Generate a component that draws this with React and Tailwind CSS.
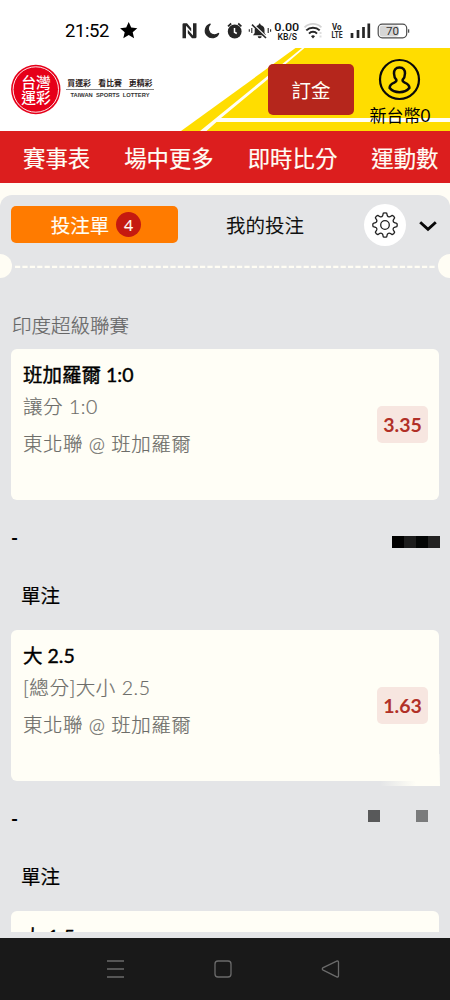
import React from "react";

const FONT = "font-['Lato','Noto_Sans_CJK_TC',sans-serif]";

function StatusBar() {
  return (
    <div className="flex h-12 items-center bg-white pt-[13px] pl-[65px] text-[#1c1c1c]">
      <span className="w-[54px] pt-px font-['Roboto',sans-serif] text-[18.5px] leading-none tracking-[-0.4px] whitespace-nowrap text-black">21:52</span>
      <svg className="block h-[48px] w-[331px] -translate-y-px" viewBox="119 6 331 48" fill="none">
        <path d="M128.700 22l2.500 5.600 6.100.6-4.600 4 1.400 6-5.400-3.200-5.400 3.200 1.400-6-4.600-4 6.100-.6z" fill="#000" />
        <path d="M182.500 24.500q0-1.300 1.300-1.300h3.200l4.200 5v3.400l-5.200-5.800v12.400h-3.500zM196.500 36.700q0 1.500-1.300 1.500h-3.200l-4.200-5v-3.400l5.200 5.800V23.200h3.500z" fill="#262626" />
        <path d="M210.400 24a7 7 0 1 0 8.400 9.300 6.200 6.200 0 0 1-8.400-9.300z" fill="#262626" stroke="#262626" strokeWidth="1.200" />
        <circle cx="234.700" cy="31.500" r="6.900" fill="#262626" />
        <path d="M228 26.300l3.200-2.800M241.400 26.300l-3.200-2.800" stroke="#262626" strokeWidth="1.700" />
        <path d="M234.500 28v4.200l2.300 1.300" stroke="#fff" strokeWidth="1.500" />
        <path d="M253 35.300l1.700-2.400v-3.100a5 5 0 0 1 3.900-4.800c.1-2 2-2 2.100 0a5 5 0 0 1 3.800 4.800v3.100l1.600 2.400zM257.700 36.300h4a2 2 0 0 1-4 0z" fill="#262626" />
        <path d="M252.700 24.200l14.200 13.500" stroke="#fff" strokeWidth="2" />
        <path d="M252 24.700l14 13.300" stroke="#262626" strokeWidth="1.600" />
        <path d="M249.300 29.300v2.400M251.800 28v5M268.200 28v5M270.600 29.300v2.400" stroke="#262626" strokeWidth="1.100" />
        <text x="274.300" y="31.200" fontFamily="Roboto" fontWeight="500" fontSize="11.800" textLength="25" lengthAdjust="spacingAndGlyphs" fill="#111">0.00</text>
        <text x="277.500" y="39.500" fontFamily="Roboto" fontWeight="500" fontSize="8.600" textLength="19.500" lengthAdjust="spacingAndGlyphs" fill="#111">KB/S</text>
        <path d="M304.600 27.400a12 12 0 0 1 16.800 0" stroke="#d2d2d2" strokeWidth="1.800" />
        <path d="M306.300 30.400a9.500 9.500 0 0 1 13.400 0M309 33.600a5.500 5.500 0 0 1 8 0" stroke="#262626" strokeWidth="2" />
        <path d="M313 38.500l-2-2.300a3 3 0 0 1 4 0z" fill="#262626" />
        <path d="M320.500 32v2M320.500 35.500v2" stroke="#ddd" strokeWidth="2" />
        <text x="332" y="30.300" fontFamily="Roboto" fontWeight="700" fontSize="9" textLength="9.500" lengthAdjust="spacingAndGlyphs" fill="#262626">Vo</text>
        <text x="331.500" y="38" fontFamily="Roboto" fontWeight="700" fontSize="9" textLength="11" lengthAdjust="spacingAndGlyphs" fill="#262626">LTE</text>
        <path d="M352 33v5M358 30v8M363.500 27v11M368.800 23.500v14.500" stroke="#262626" strokeWidth="2.700" />
        <rect x="378.200" y="24.200" width="28.500" height="13.600" rx="4" stroke="#4c4c4c" strokeWidth="1.200" fill="#fff" />
        <rect x="379.700" y="25.600" width="19" height="10.800" rx="2.600" fill="#d6d6d6" />
        <path d="M408.600 29.300v3.400" stroke="#4c4c4c" strokeWidth="1.300" />
        <text x="386.100" y="35" fontFamily="Roboto" fontSize="11" textLength="13" lengthAdjust="spacingAndGlyphs" fill="#333">70</text>
      </svg>
    </div>
  );
}

function Header() {
  return (
    <div className="relative h-[83px] bg-white">
      <svg className="absolute inset-0" width="450" height="83" viewBox="0 48 450 83">
        <path d="M295.500 48H450V131H181z" fill="#ffdd00" />
        <path d="M302 48h2.500L264 82.500 221 118h229v4H216.500L206.500 131H200z" fill="#fffef5" />
      </svg>
      <div className="relative flex h-full items-start">
        <svg className="ml-[11px] mt-[16px] block shrink-0" width="145" height="51" viewBox="11 64 145 51">
          <circle cx="35.800" cy="89.500" r="24.700" fill="#e60019" />
          <circle cx="35.800" cy="89.500" r="22.700" fill="none" stroke="#fff" strokeWidth="0.900" />
          <g fontFamily="'Noto Sans CJK TC'" fontWeight="500" fontSize="14.800" fill="#fff">
            <text x="21.300" y="87.900">台灣</text>
            <text x="21.300" y="102.900">運彩</text>
          </g>
          <g fontFamily="'Noto Sans CJK TC'" fontWeight="700" fontSize="7.900" fill="#2a2020">
            <text x="67.300" y="85.500">買運彩</text>
            <text x="98.300" y="85.500">看比賽</text>
            <text x="128.800" y="85.500">更精彩</text>
          </g>
          <path d="M66 89.500h88" stroke="#555" strokeWidth="0.700" />
          <text x="70.500" y="97.300" fontFamily="'Liberation Sans'" fontWeight="700" fontSize="5.600" textLength="79" lengthAdjust="spacingAndGlyphs" fill="#333" style={{ whiteSpace: "pre" }}>TAIWAN  SPORTS  LOTTERY</text>
        </svg>
        <button className="ml-[112px] mt-4 flex h-[51px] w-[86px] shrink-0 items-center justify-center rounded-[5px] bg-[#b5261c] pt-0.5 text-[19.500px] leading-none text-[#fffdf5]">訂金</button>
        <div className="ml-3 mt-2.5 flex w-[68px] flex-col items-center text-black">
          <svg width="44" height="44" viewBox="0 0 44 44" fill="none" stroke="#0a0a0a">
            <circle cx="21.500" cy="21.500" r="19.500" strokeWidth="2.200" />
            <path d="M21.500 9.500c-4 0-5.600 2.900-5.500 6 .1 3 1.100 5 2.300 6.200.5 1.700-.3 2.200-2 2.900-3 1.200-4.700 2.600-4.700 5.300 2.600 3.200 6 4.300 9.900 4.300s7.300-1.100 9.900-4.300c0-2.700-1.700-4.100-4.700-5.300-1.700-.7-2.500-1.200-2-2.900 1.200-1.200 2.200-3.200 2.300-6.200.1-3.100-1.500-6-5.500-6z" strokeWidth="2.500" strokeLinejoin="round" />
          </svg>
          <span className="mt-[5px] text-[17px] leading-[18px] whitespace-nowrap">新台幣0</span>
        </div>
      </div>
    </div>
  );
}

function MainNav() {
  return (
    <nav className="flex h-[52px] items-center gap-[34px] overflow-hidden bg-[#dc1e1e] pt-[4px] pl-[23px] text-[22.400px] leading-none whitespace-nowrap text-[#fffdf5] [-webkit-text-stroke:0.2px]">
      <span>賽事表</span>
      <span>場中更多</span>
      <span>即時比分</span>
      <span>運動數</span>
    </nav>
  );
}

function Tabs() {
  return (
    <div className="flex h-[59px] items-center pl-[11px]">
      <button className="flex h-[37px] w-[167px] items-center justify-center gap-[7px] rounded-[5px] bg-[#ff7b00] pl-[3px] text-[19.500px] leading-none text-[#fffdf5] [-webkit-text-stroke:0.15px]">
        <span className="pt-[3px]">投注單</span>
        <span className="flex size-[25px] items-center justify-center rounded-full bg-[#c51a10] text-[16px]">4</span>
      </button>
      <span className="ml-12 w-[138px] pt-[3px] text-[19.500px] leading-none text-[#111]">我的投注</span>
      <span className="flex size-[42px] shrink-0 items-center justify-center rounded-full bg-white">
        <svg width="26" height="26" viewBox="0 0 26 26" fill="none" stroke="#222" strokeWidth="1.300" strokeLinejoin="round">
          <path d="M11.300 1.200Q13 .4 14.700 1.200L15.300 3.600Q16.200 5.300 18 4.700L20.200 3.400Q22 4 22.600 5.800L21.300 8Q20.700 9.800 22.400 10.700L24.800 11.300Q25.600 13 24.800 14.700L22.400 15.300Q20.700 16.200 21.300 18L22.600 20.200Q22 22 20.200 22.600L18 21.300Q16.200 20.700 15.300 22.400L14.700 24.800Q13 25.600 11.300 24.800L10.700 22.400Q9.800 20.700 8 21.300L5.800 22.600Q4 22 3.400 20.200L4.700 18Q5.300 16.200 3.600 15.300L1.200 14.700Q.4 13 1.200 11.300L3.600 10.700Q5.300 9.800 4.700 8L3.400 5.800Q4 4 5.800 3.400L8 4.700Q9.800 5.300 10.700 3.600z" />
          <circle cx="13" cy="13" r="4.300" />
        </svg>
      </span>
      <svg className="mt-0.5 ml-[13px]" width="18" height="12" viewBox="0 0 18 12" fill="none" stroke="#080808" strokeWidth="2.900">
        <path d="M1.200 2.200L9 9.400l7.800-7.200" />
      </svg>
    </div>
  );
}

function TicketTear() {
  return (
    <div className="flex h-[24px] items-center overflow-hidden">
      <span className="-ml-3 size-6 shrink-0 rounded-full bg-[#fffdf4]" />
      <svg className="block grow" height="4" width="426">
        <path d="M3 2.900H424" stroke="#fffdf4" strokeWidth="2.400" strokeDasharray="5.200 2.200" />
      </svg>
      <span className="-mr-3 size-6 shrink-0 rounded-full bg-[#fffdf4]" />
    </div>
  );
}

function BetCard({ pick, market, match, odds, smear }) {
  return (
    <div className="relative mx-[11px] flex h-[151px] items-center justify-between rounded-md bg-[#fffef6] pr-[11px] pl-3">
      {smear && (
        <span className="absolute right-[-1px] bottom-[-5px] h-8 w-[60px] bg-linear-to-r from-transparent to-[#fffef6] to-60% [clip-path:polygon(99%_0,100%_100%,0_100%,0_60%)]" />
      )}
      <div className="relative h-full pt-[11px] whitespace-nowrap">
        <p className="h-[32px] text-[19.500px] leading-[30px] text-black [-webkit-text-stroke:0.4px]">{pick}</p>
        {market && <p className="h-[36px] text-[19.500px] font-light leading-[30px] tracking-[0.55px] text-[#6d6d69] [-webkit-text-stroke:0.2px]">{market}</p>}
        {match && <p className="text-[19.500px] font-light leading-[32px] tracking-[0.500px] text-[#6d6d69] [-webkit-text-stroke:0.2px]">{match}</p>}
      </div>
      {odds && (
        <span className="relative flex h-[37px] w-[51px] items-center justify-center rounded-[5px] bg-[#f7e6e0] text-[19.500px] font-bold leading-none text-[#b13027]">{odds}</span>
      )}
    </div>
  );
}

function StakeRow({ children }) {
  return (
    <div className="flex h-[77px] items-center justify-between pr-[10px] pl-[11px]">
      <span className="-mt-0.5 text-[19px] font-bold leading-none text-black">-</span>
      {children}
    </div>
  );
}

function BetType() {
  return <div className="flex h-[53px] items-start pt-[9px] pl-[21px] text-[19.500px] leading-none text-black [-webkit-text-stroke:0.2px]">單注</div>;
}

export default function App() {
  return (
    <div className={`flex h-[1000px] w-[450px] flex-col overflow-hidden bg-[#fffdf5] ${FONT}`}>
      <StatusBar />
      <Header />
      <MainNav />
      <main className="mt-3 h-[743px] overflow-hidden rounded-t-xl bg-[#e4e5e7] pb-1.5">
        <div className="h-[737px] overflow-hidden">
          <Tabs />
          <TicketTear />
          <h2 className="mt-5 h-[51px] pt-[14px] pl-3 text-[19.500px] font-light leading-[28px] text-[#666] [-webkit-text-stroke:0.2px]">印度超級聯賽</h2>
          <BetCard pick="班加羅爾 1:0" market="讓分 1:0" match="東北聯 @ 班加羅爾" odds="3.35" />
          <StakeRow>
            <span className="mt-[6px] flex h-3">
              <span className="w-3 bg-black" />
              <span className="w-3 bg-[#1c1c1c]" />
              <span className="w-3 bg-[#030505]" />
              <span className="w-3 bg-[#222]" />
            </span>
          </StakeRow>
          <BetType />
          <BetCard pick="大 2.5" market="[總分]大小 2.5" match="東北聯 @ 班加羅爾" odds="1.63" smear />
          <StakeRow>
            <span className="mt-[-8px] mr-[12px] flex h-3 gap-9">
              <span className="w-3 bg-[#58595a]" />
              <span className="w-3 bg-[#7a7b7c]" />
            </span>
          </StakeRow>
          <BetType />
          <BetCard pick="大 1.5" />
        </div>
      </main>
      <footer className="flex h-[62px] shrink-0 items-center bg-[#191919] pl-[106px]">
        <svg width="240" height="22" viewBox="106 958 240 22" fill="none" stroke="#6b6b6b" strokeWidth="1.300">
          <path d="M107 961h17M107 969h17M107 977h17" />
          <rect x="215" y="961" width="16" height="16" rx="3" />
          <path d="M323.200 967.600l13.500-6.400c1.100-.5 1.800 0 1.800 1v13.600c0 1-.7 1.500-1.800 1l-13.500-6.600c-1.200-.7-1.200-1.900 0-2.600z" />
        </svg>
      </footer>
    </div>
  );
}
